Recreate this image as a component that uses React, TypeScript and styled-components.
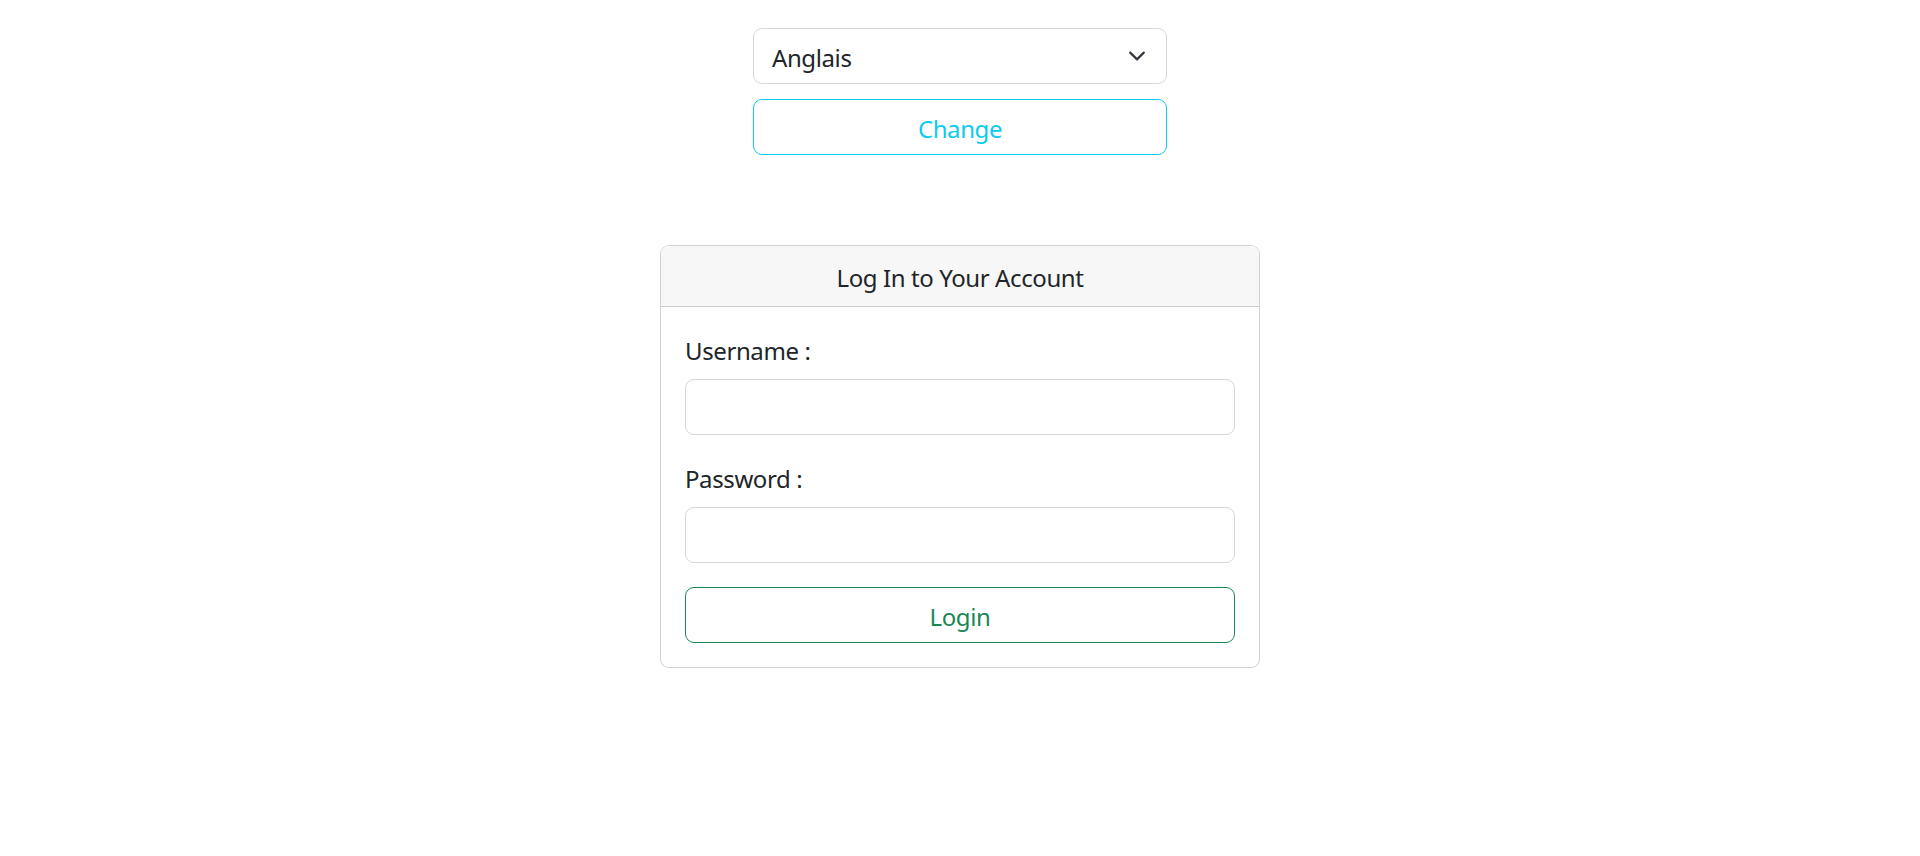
import React from "react";
import styled, { createGlobalStyle } from "styled-components";

const GlobalStyle = createGlobalStyle`
  *, *::before, *::after { box-sizing: border-box; }
  html, body { margin: 0; padding: 0; background: #fff; }
  body {
    font-family: "Noto Sans", "Open Sans", "Liberation Sans", sans-serif;
    font-size: 24px;
    line-height: 1.5;
    letter-spacing: -0.4px;
    color: #212529;
  }
`;

const Page = styled.div`
  display: flex;
  flex-direction: column;
  align-items: center;
  padding-top: 28px;
`;

const LangForm = styled.form`
  width: 414px;
  display: flex;
  flex-direction: column;
  gap: 15px;
`;

const SelectWrap = styled.div`
  position: relative;
  width: 100%;
`;

const Select = styled.select`
  appearance: none;
  width: 100%;
  height: 56px;
  padding: 11px 54px 7px 18px;
  font: inherit;
  letter-spacing: inherit;
  color: #212529;
  background: #fff;
  border: 1px solid #d3d7dc;
  border-radius: 9px;
  outline: none;
`;

const Chevron = styled.svg`
  position: absolute;
  right: 18px;
  top: 50%;
  width: 24px;
  height: 18px;
  transform: translateY(-50%);
  pointer-events: none;
`;

const OutlineButton = styled.button<{ $color: string }>`
  width: 100%;
  height: 56px;
  padding: 11px 18px 7px;
  font: inherit;
  letter-spacing: inherit;
  color: ${(p) => p.$color};
  background: transparent;
  border: 1px solid ${(p) => p.$color};
  border-radius: 9px;
  cursor: pointer;
`;

const Card = styled.div`
  margin-top: 90px;
  width: 600px;
  border: 1px solid rgba(0, 0, 0, 0.175);
  border-radius: 9px;
  overflow: hidden;
  background: #fff;
`;

const CardHeader = styled.div`
  padding: 14px 24px 10px;
  background: #f7f7f7;
  border-bottom: 1px solid rgba(0, 0, 0, 0.175);
  text-align: center;
  line-height: 36px;
`;

const CardBody = styled.form`
  padding: 24px;
  display: flex;
  flex-direction: column;
`;

const Field = styled.div`
  display: flex;
  flex-direction: column;
  margin-bottom: 24px;
`;

const Label = styled.label`
  line-height: 36px;
  padding-top: 2px;
  margin-bottom: 10px;
`;

const Input = styled.input`
  height: 56px;
  padding: 9px 18px;
  font: inherit;
  color: #212529;
  border: 1px solid #d3d7dc;
  border-radius: 9px;
  outline: none;
`;

export default function App() {
  return (
    <>
      <GlobalStyle />
      <Page>
        <LangForm onSubmit={(e) => e.preventDefault()}>
          <SelectWrap>
            <Select defaultValue="en">
              <option value="en">Anglais</option>
              <option value="fr">Français</option>
            </Select>
            <Chevron viewBox="0 0 16 16" fill="none">
              <path
                d="m2 5 6 6 6-6"
                stroke="#343a40"
                strokeWidth="2"
                strokeLinecap="round"
                strokeLinejoin="round"
              />
            </Chevron>
          </SelectWrap>
          <OutlineButton type="submit" $color="#0dcaf0">
            Change
          </OutlineButton>
        </LangForm>
        <Card>
          <CardHeader>Log In to Your Account</CardHeader>
          <CardBody onSubmit={(e) => e.preventDefault()}>
            <Field>
              <Label htmlFor="username">Username :</Label>
              <Input id="username" type="text" />
            </Field>
            <Field>
              <Label htmlFor="password">Password :</Label>
              <Input id="password" type="password" />
            </Field>
            <OutlineButton type="submit" $color="#198754">
              Login
            </OutlineButton>
          </CardBody>
        </Card>
      </Page>
    </>
  );
}
